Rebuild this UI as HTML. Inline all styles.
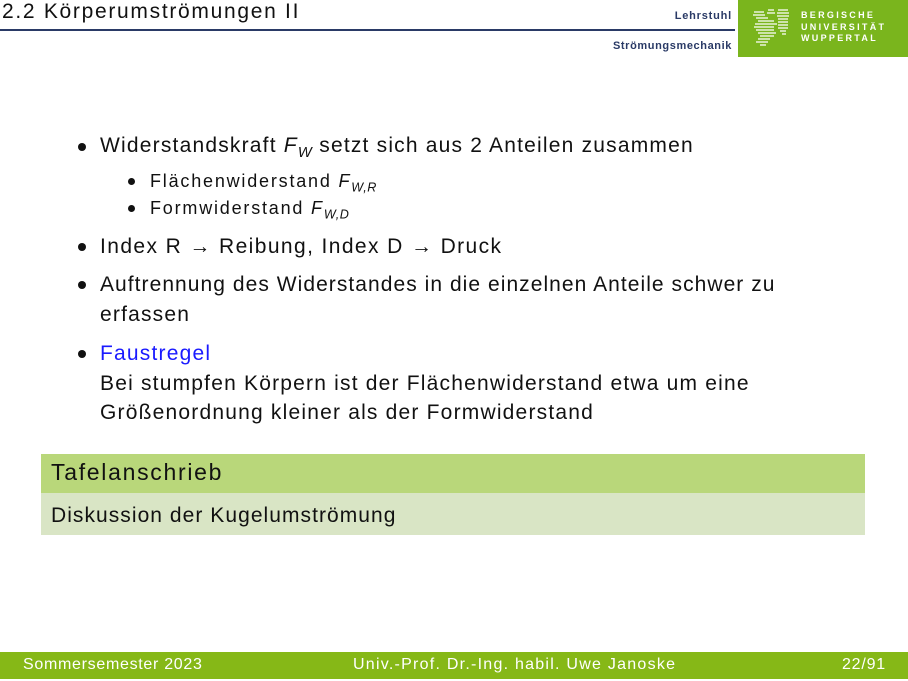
<!DOCTYPE html>
<html><head><meta charset="utf-8"><style>
*{margin:0;padding:0}
body{width:908px;height:681px;position:relative;background:#fff;font-family:"Liberation Sans",sans-serif;color:#111;overflow:hidden}
.a{position:absolute;white-space:nowrap}
.m{font-size:21px;letter-spacing:1.2px;line-height:24px}
.s{font-size:18px;letter-spacing:1.8px;line-height:20px}
.b{position:absolute;width:8px;height:8px;border-radius:50%;background:#111}
.sb{width:7px;height:7px}
i sub{font-size:0.7em;letter-spacing:0.5px}
.f{font-size:16px;color:#fff;letter-spacing:0.7px;top:656px}
</style></head><body>
<div class="a" style="left:2px;top:0px;font-size:21px;letter-spacing:1.7px">2.2 Körperumströmungen II</div>
<div class="a" style="left:0;top:29px;width:735px;height:2px;background:#2a3a66"></div>
<div class="a" style="right:176px;top:10px;font-size:11px;font-weight:bold;color:#2a3a66;letter-spacing:0.8px">Lehrstuhl</div>
<div class="a" style="right:176px;top:40px;font-size:11px;font-weight:bold;color:#2a3a66;letter-spacing:0.6px">Strömungsmechanik</div>
<div class="a" style="left:738px;top:0;width:170px;height:57px;background:#7ab51d"></div>
<svg class="a" style="left:750px;top:6px" width="44" height="44" viewBox="0 0 44 44"><g stroke="#fff" stroke-width="1.3" fill="none"><path d="M4 6h10M3 9h12M6 12h12M8 15h16M5 18h22M4 21h20M6 24h18M8 27h18M10 30h14M8 33h12M6 36h12M10 39h6M28 4h10M27 7h12M27 10h12M28 13h10M28 16h10M28 19h10M28 22h10M30 25h6M32 28h4M18 4h6M17 7h8"/></g></svg>
<div class="a" style="left:801px;top:10px;font-size:9px;font-weight:bold;color:#fff;letter-spacing:2.3px;line-height:11.5px">BERGISCHE<br>UNIVERSITÄT<br>WUPPERTAL</div>

<div class="b" style="left:78px;top:143px"></div>
<div class="a m" style="left:100px;top:134px">Widerstandskraft <i>F<sub>W</sub></i> setzt sich aus 2 Anteilen zusammen</div>
<div class="b sb" style="left:128px;top:178px"></div>
<div class="a s" style="left:150px;top:171px">Flächenwiderstand <i>F<sub>W,R</sub></i></div>
<div class="b sb" style="left:128px;top:205px"></div>
<div class="a s" style="left:150px;top:198px">Formwiderstand <i>F<sub>W,D</sub></i></div>
<div class="b" style="left:78px;top:243px"></div>
<div class="a m" style="left:100px;top:235px;letter-spacing:1.4px">Index R → Reibung, Index D → Druck</div>
<div class="b" style="left:78px;top:281px"></div>
<div class="a m" style="left:100px;top:273px;letter-spacing:1.05px">Auftrennung des Widerstandes in die einzelnen Anteile schwer zu</div>
<div class="a m" style="left:100px;top:303px">erfassen</div>
<div class="b" style="left:78px;top:350px"></div>
<div class="a m" style="left:100px;top:342px;color:#1a1aff">Faustregel</div>
<div class="a m" style="left:100px;top:372px">Bei stumpfen Körpern ist der Flächenwiderstand etwa um eine</div>
<div class="a m" style="left:100px;top:401px">Größenordnung kleiner als der Formwiderstand</div>

<div class="a" style="left:41px;top:454px;width:824px;height:39px;background:#b9d77a"></div>
<div class="a" style="left:41px;top:493px;width:824px;height:42px;background:#d9e5c5"></div>
<div class="a" style="left:51px;top:459px;font-size:23px;letter-spacing:1.7px">Tafelanschrieb</div>
<div class="a m" style="left:51px;top:504px;letter-spacing:1.05px">Diskussion der Kugelumströmung</div>

<div class="a" style="left:0;top:652px;width:908px;height:27px;background:#86b817"></div>
<div class="a f" style="left:23px">Sommersemester 2023</div>
<div class="a f" style="left:353px;letter-spacing:1.25px">Univ.-Prof. Dr.-Ing. habil. Uwe Janoske</div>
<div class="a f" style="right:22px;letter-spacing:0.8px">22/91</div>
</body></html>
